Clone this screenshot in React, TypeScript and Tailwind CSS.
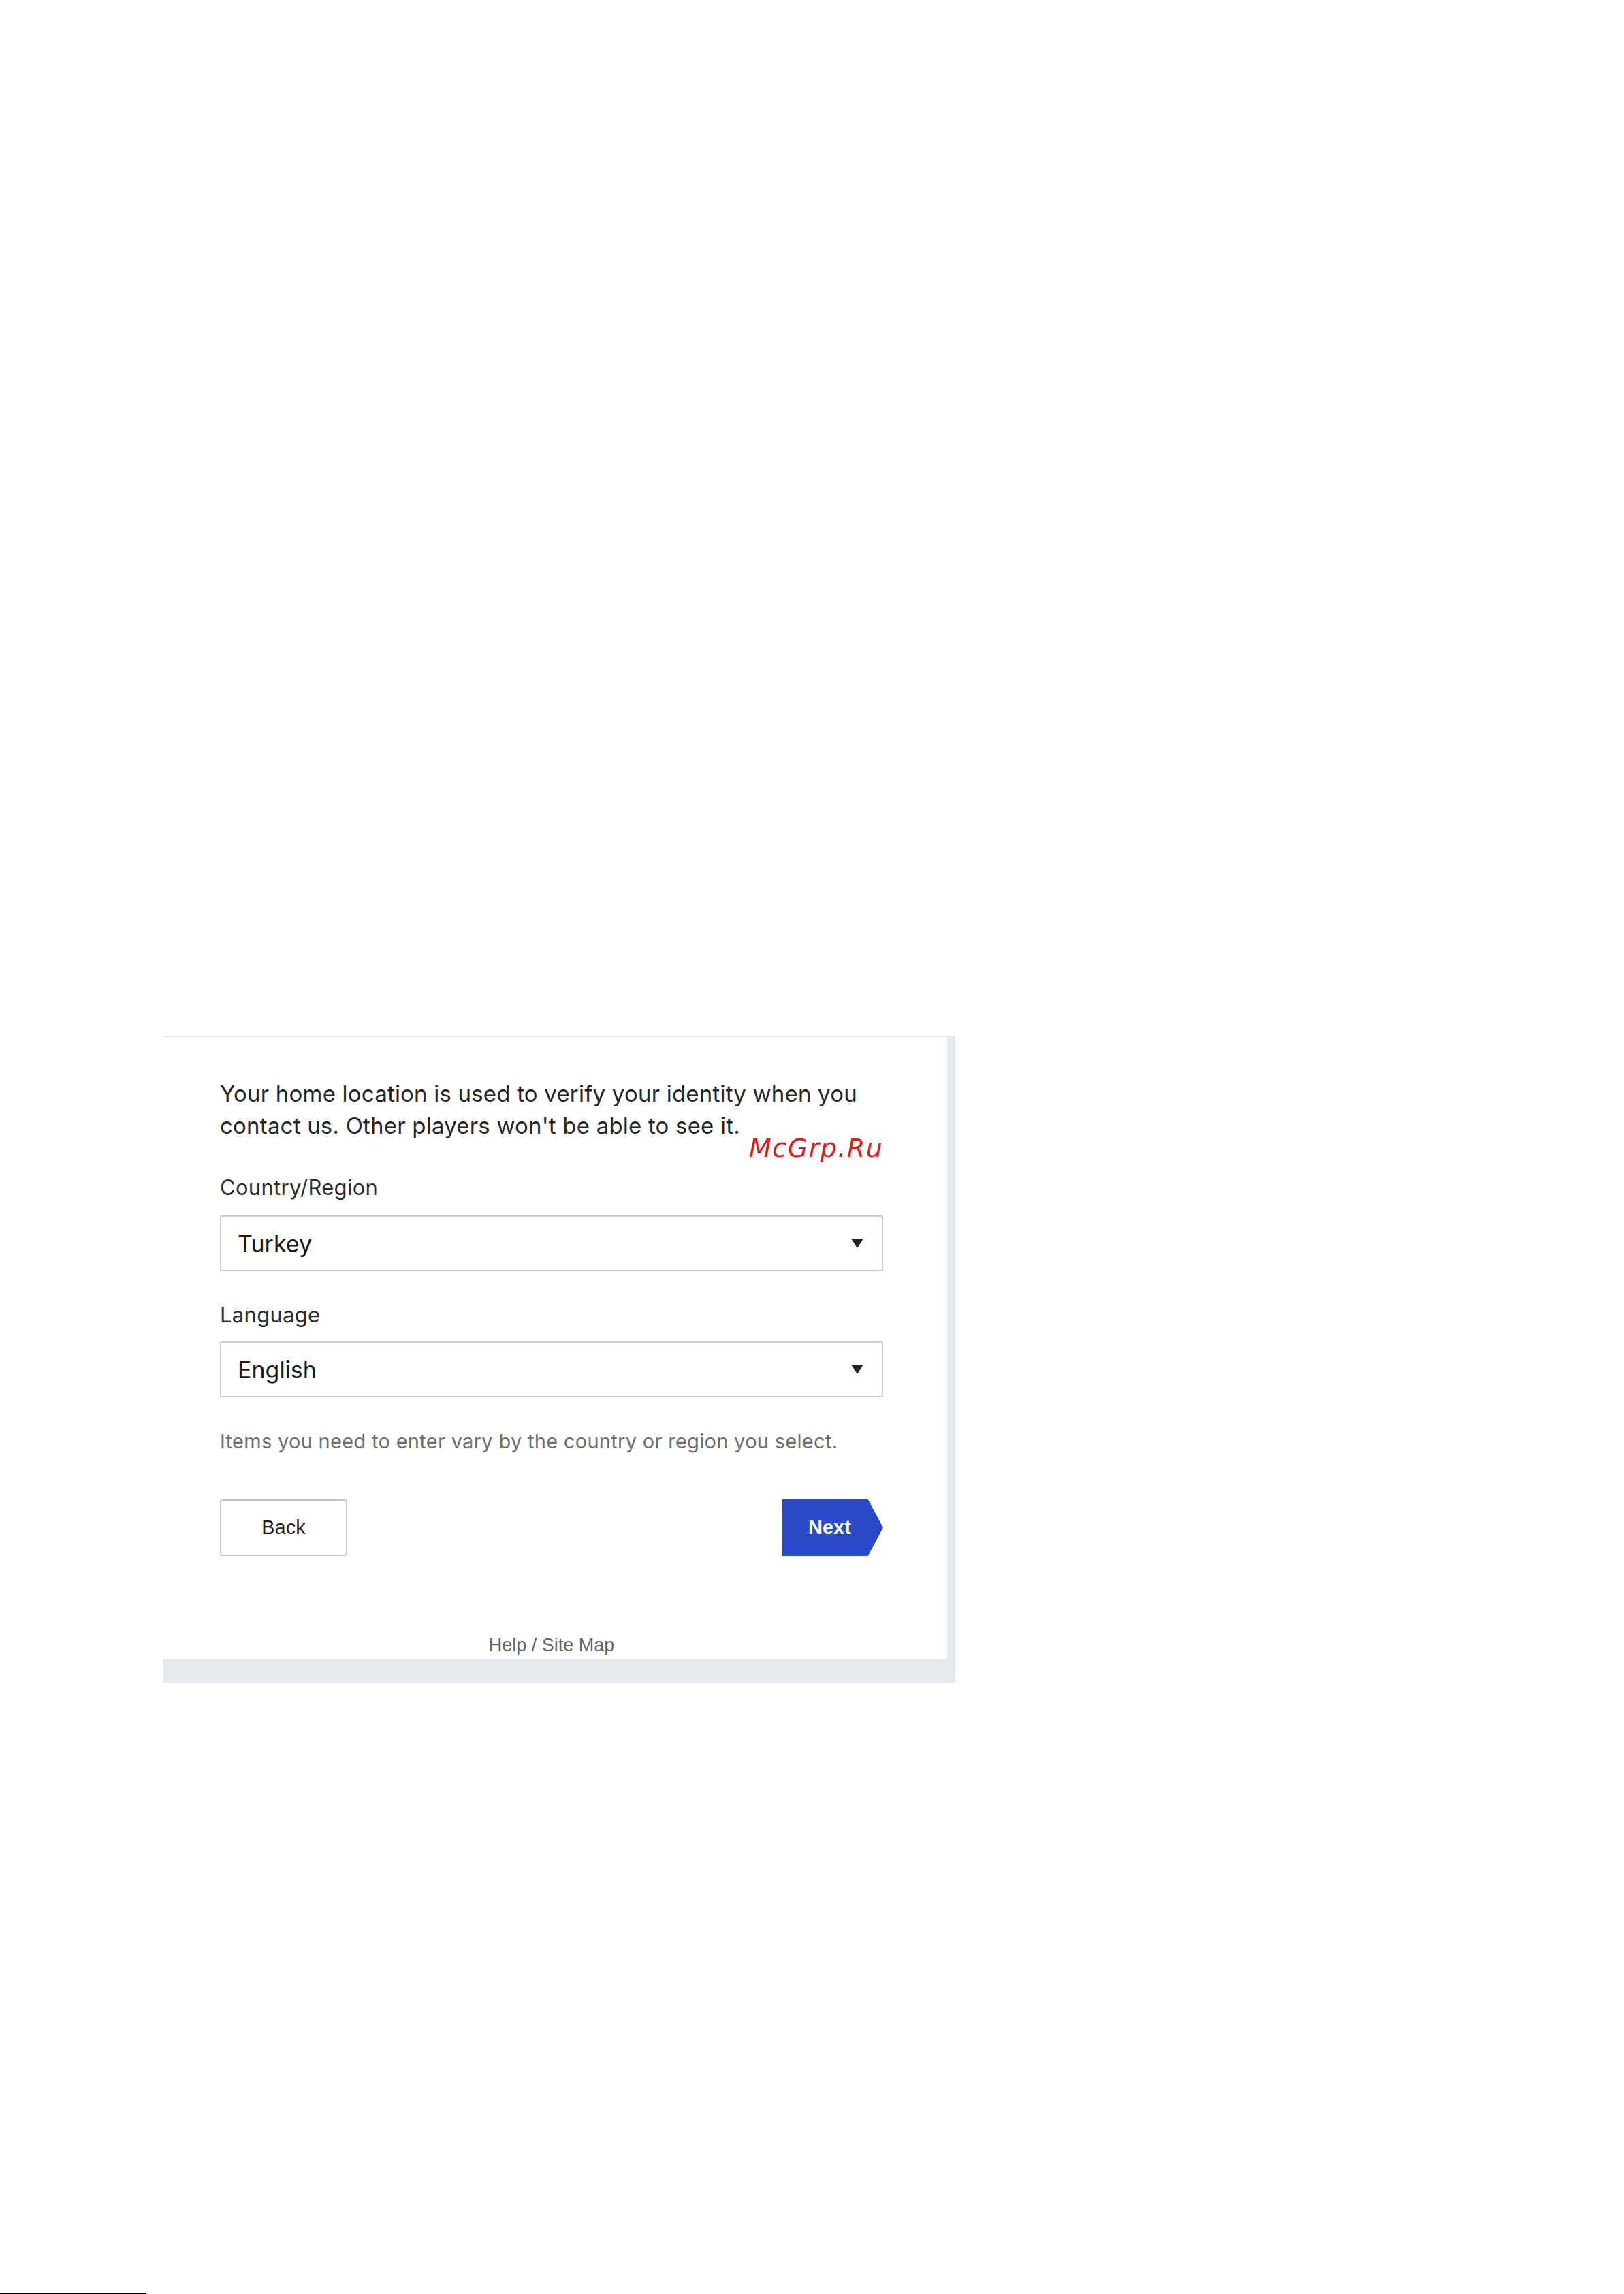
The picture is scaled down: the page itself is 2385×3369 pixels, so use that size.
import React from "react";

function Caret() {
  return (
    <svg width="18" height="14" viewBox="0 0 18 14" className="mr-[27px]">
      <polygon points="0,0 18,0 9,14" fill="#222" />
    </svg>
  );
}

function SelectBox({ value }: { value: string }) {
  return (
    <div className="flex h-[82px] w-full items-center justify-between rounded-[2px] border-2 border-[#cdcdcd] bg-white">
      <span className="pl-[24px] text-[34px] text-[#1a1a1a]">{value}</span>
      <Caret />
    </div>
  );
}

export default function App() {
  return (
    <div className="flex h-[3369px] w-full flex-col bg-white pt-[1521px] font-['Inter',sans-serif]">
      <section className="relative ml-[240px] flex w-[1163px] flex-col bg-[#e5e9ee] pb-[35px] pr-[12px]">
        <div className="flex flex-col border-t-2 border-[#e4e4e6] bg-white pb-[5px] pl-[83px] pr-[94px] pt-[60px]">
          <p className="text-[33px] leading-[47px] tracking-[0.2px] text-[#252525]">
            Your home location is used to verify your identity when you
            <br />
            contact us. Other players won't be able to see it.
          </p>

          <label className="mt-[49px] text-[31px] leading-[36px] tracking-[0.3px] text-[#2e2e2e]">Country/Region</label>
          <div className="mt-[23px]">
            <SelectBox value="Turkey" />
          </div>

          <label className="mt-[46px] text-[31px] leading-[36px] tracking-[0.3px] text-[#2e2e2e]">Language</label>
          <div className="mt-[21px]">
            <SelectBox value="English" />
          </div>

          <p className="mt-[48px] text-[29px] leading-[34px] tracking-[0.3px] text-[#6e6e6e]">
            Items you need to enter vary by the country or region you select.
          </p>

          <div className="mt-[68px] flex items-center justify-between font-['Liberation_Sans',Arial,sans-serif]">
            <button className="flex h-[83px] w-[187px] items-center justify-center rounded-[3px] border-2 border-[#c8c8c8] bg-white text-[29px] text-[#1f1f1f]">
              Back
            </button>
            <button className="flex h-[83px] w-[148px] items-center bg-[#2a49c9] pl-[38px] text-[29px] font-bold text-white [clip-path:polygon(0_0,85%_0,100%_50%,85%_100%,0_100%)]">
              Next
            </button>
          </div>

          <div className="mt-[115px] text-center font-['Liberation_Sans',Arial,sans-serif] text-[27px] leading-[32px] text-[#666]">
            Help / Site Map
          </div>
        </div>

        <span className="absolute left-[860px] top-[146px] font-['DejaVu_Sans',sans-serif] text-[38px] italic leading-[38px] tracking-[1.5px] text-[#d91c1c]">
          McGrp.Ru
        </span>
      </section>

      <div className="mt-auto h-px w-[214px] bg-black" />
    </div>
  );
}
